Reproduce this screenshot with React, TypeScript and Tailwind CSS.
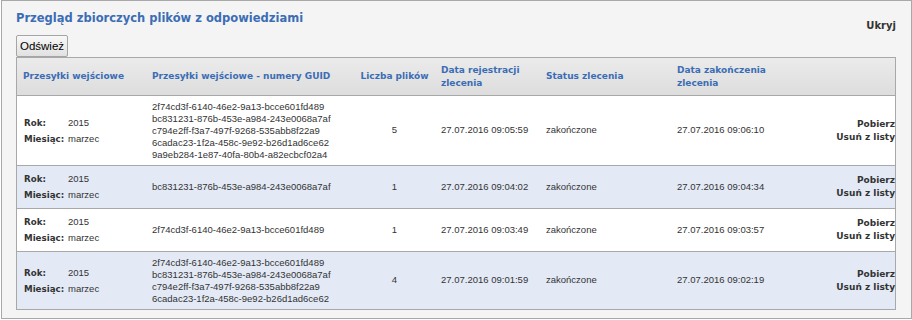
import React from "react";

type Row = {
  guids: string[];
  count: string;
  reg: string;
  status: string;
  end: string;
  blue: boolean;
};

const rows: Row[] = [
  {
    guids: [
      "2f74cd3f-6140-46e2-9a13-bcce601fd489",
      "bc831231-876b-453e-a984-243e0068a7af",
      "c794e2ff-f3a7-497f-9268-535abb8f22a9",
      "6cadac23-1f2a-458c-9e92-b26d1ad6ce62",
      "9a9eb284-1e87-40fa-80b4-a82ecbcf02a4",
    ],
    count: "5",
    reg: "27.07.2016 09:05:59",
    status: "zakończone",
    end: "27.07.2016 09:06:10",
    blue: false,
  },
  {
    guids: ["bc831231-876b-453e-a984-243e0068a7af"],
    count: "1",
    reg: "27.07.2016 09:04:02",
    status: "zakończone",
    end: "27.07.2016 09:04:34",
    blue: true,
  },
  {
    guids: ["2f74cd3f-6140-46e2-9a13-bcce601fd489"],
    count: "1",
    reg: "27.07.2016 09:03:49",
    status: "zakończone",
    end: "27.07.2016 09:03:57",
    blue: false,
  },
  {
    guids: [
      "2f74cd3f-6140-46e2-9a13-bcce601fd489",
      "bc831231-876b-453e-a984-243e0068a7af",
      "c794e2ff-f3a7-497f-9268-535abb8f22a9",
      "6cadac23-1f2a-458c-9e92-b26d1ad6ce62",
    ],
    count: "4",
    reg: "27.07.2016 09:01:59",
    status: "zakończone",
    end: "27.07.2016 09:02:19",
    blue: true,
  },
];

const cols = "grid grid-cols-[128px_210px_79px_105px_131px_130px_1fr]";
const bold = "font-['DejaVu_Sans',sans-serif] font-bold";
const body = "font-['Liberation_Sans',Arial,sans-serif] text-[9.5px] text-[#333]";

export default function App() {
  return (
    <div className="w-[912px] h-[320px] pl-px bg-white">
      <div className="w-[911px] h-[319px] border border-[#a8a8a8] bg-[#f4f4f4] pl-[14px] pr-[15px]">
        <div className="flex justify-between items-start h-[34px]">
          <div className={`${bold} pt-[10px] text-[11.5px] leading-[14px] text-[#3b6db4]`}>
            Przegląd zbiorczych plików z odpowiedziami
          </div>
          <div className={`${bold} pt-[18px] text-[10px] leading-[14px] text-[#333]`}>Ukryj</div>
        </div>
        <div className="h-[22px] flex">
          <button className="h-[22px] w-[52px] border border-[#a5a5a5] rounded-[2px] bg-gradient-to-b from-[#f8f8f8] to-[#e1e1e1] font-['Liberation_Sans',Arial,sans-serif] text-[11.5px] text-black leading-[20px] px-0">
            Odśwież
          </button>
        </div>
        <div className="border-x border-t border-[#a8a8a8] bg-white">
          <div
            className={`${cols} h-[38px] items-center border-b border-[#a8a8a8] bg-gradient-to-b from-[#ebebeb] to-[#dddddd] ${bold} text-[9px] leading-[13px] text-[#3b6db4]`}
          >
            <div className="pl-[6px]">Przesyłki wejściowe</div>
            <div className="pl-[7px]">Przesyłki wejściowe - numery GUID</div>
            <div className="text-center">Liczba plików</div>
            <div className="pl-[7px] pr-[4px]">Data rejestracji zlecenia</div>
            <div className="pl-[7px]">Status zlecenia</div>
            <div className="pl-[7px] pr-[20px]">Data zakończenia zlecenia</div>
            <div></div>
          </div>
          {rows.map((r, i) => (
            <div
              key={i}
              className={`${cols} items-center border-b border-[#a8a8a8] ${r.blue ? "bg-[#e3eaf6]" : "bg-white"}`}
            >
              <div className="pl-[7px] py-[5px]">
                <div className="flex h-[16px] items-baseline leading-[16px]">
                  <span className={`${bold} text-[8.7px] text-[#333] w-[44px]`}>Rok:</span>
                  <span className={body}>2015</span>
                </div>
                <div className="flex h-[16px] items-baseline leading-[16px]">
                  <span className={`${bold} text-[8.7px] text-[#333] w-[44px]`}>Miesiąc:</span>
                  <span className={body}>marzec</span>
                </div>
              </div>
              <div className={`pl-[7px] py-[4.5px] ${body} leading-[12px]`}>
                {r.guids.map((g) => (
                  <div key={g}>{g}</div>
                ))}
              </div>
              <div className={`text-center ${body}`}>{r.count}</div>
              <div className={`pl-[7px] ${body}`}>{r.reg}</div>
              <div className={`pl-[7px] ${body}`}>{r.status}</div>
              <div className={`pl-[7px] ${body}`}>{r.end}</div>
              <div className={`text-right ${bold} text-[9px] leading-[13px] text-[#333] whitespace-nowrap`}>
                <div>Pobierz</div>
                <div>Usuń z listy</div>
              </div>
            </div>
          ))}
        </div>
      </div>
    </div>
  );
}
